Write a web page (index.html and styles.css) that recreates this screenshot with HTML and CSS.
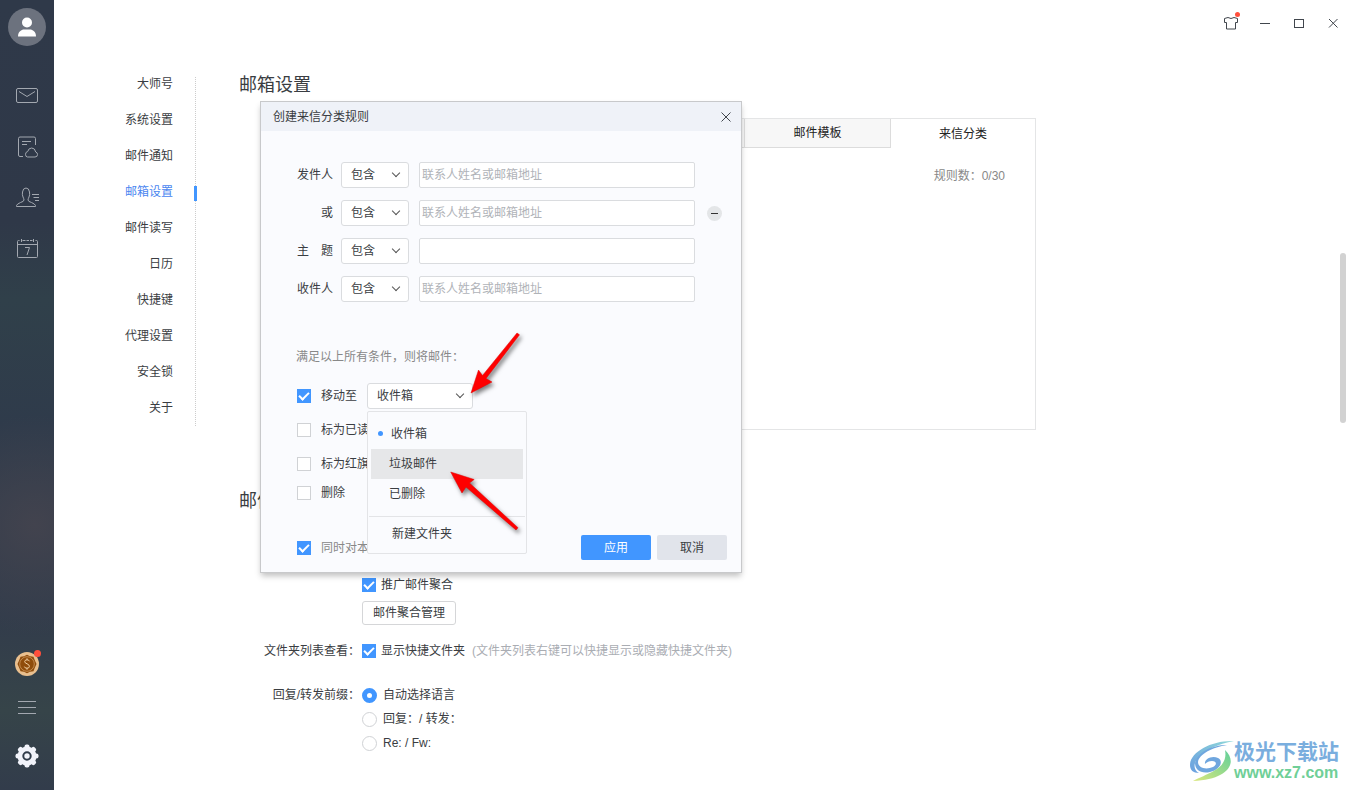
FILE: index.html
```html
<!DOCTYPE html>
<html lang="zh-CN">
<head>
<meta charset="utf-8">
<title>邮箱设置</title>
<link rel="stylesheet" href="styles.css">
</head>
<body>
<div class="app">
  <aside class="sidebar">
    <button class="avatar" aria-label="avatar">
      <svg width="18" height="20" viewBox="0 0 18 20"><g fill="#fff"><circle cx="9" cy="5.500" r="5"/><path d="M0 19.500c0-5 3.500-7 6-7h6c2.500 0 6 2 6 7z"/></g></svg>
    </button>
    <nav class="side-nav">
      <button class="icon-btn" aria-label="mail"><svg width="24" height="24" viewBox="0 0 24 24"><rect x="1.500" y="4.500" width="21" height="14" rx="1.500"/><path d="M4 7.500l8 5L20 7.500"/></svg></button>
      <button class="icon-btn" aria-label="notes"><svg width="24" height="24" viewBox="0 0 24 24"><path d="M8 21.500H5q-1.500 0-1.500-1.500V3.500Q3.500 2 5 2h14q1.500 0 1.500 1.500V10M7 6.500h9M7 9.500h5M12.500 22h7.500q2.500 0 2.500-2.500 0-2-1.800-2.500-.7-4-4-4-3.200 0-4 3.500-2.200.5-2.200 2.800 0 2.700 2 2.700z"/></svg></button>
      <button class="icon-btn" aria-label="contacts"><svg width="24" height="24" viewBox="0 0 24 24"><path d="M1.500 20.500v-1q.5-1.500 4-3 3.500-1 3.500-2.500 0-1-1-3Q7 9 7.500 6q.5-4 3.500-4t3.500 4q.5 3-.5 5-1 2-1 3 0 1.500 3.500 2.500 3.500 1.500 4 3v1zM17 8.500h7M18.500 11.500H24M20 14.500h4"/></svg></button>
      <button class="icon-btn" aria-label="calendar"><svg width="24" height="24" viewBox="0 0 24 24"><path d="M4.500 3.500h-1q-1 0-1 1v15q0 1 1 1h18q1 0 1-1v-15q0-1-1-1h-1M7.500 3.500h3M11.500 3.500h2.500M15 3.500h2.500M2.500 7.500h20M6.500 2v3M18.500 2v3M10 10.500h4.500l-2.500 7.500"/></svg></button>
    </nav>
    <div class="side-foot">
      <button class="icon-btn coin" aria-label="coin"><svg width="24" height="24" viewBox="0 0 24 24"><circle cx="12" cy="12" r="12" fill="#e9bf8e" stroke="none"/><path d="M12 2.700l3 1.600 3.500.4 1.200 3.300L21.500 12l-1.800 4-1.200 3.300-3.500.4-3 1.600-3-1.600-3.500-.4L4.300 16 2.500 12l1.800-4 1.200-3.300 3.500-.4z" fill="#8f4c0b" stroke="none"/><circle cx="12" cy="12" r="7.300" stroke="#d9a56c" stroke-width=".7"/><path d="M14.500 9.300q-.5-1.500-2.500-1.500T9.700 9.500q0 1.500 2.300 2.300t2.400 2.500q0 1.900-2.400 1.900t-2.600-1.600M12 6.300v1.500M12 16v1.700" stroke="#f0cfa4"/></svg></button>
      <button class="icon-btn" aria-label="menu"><svg width="24" height="24" viewBox="0 0 24 24"><path d="M3 6.500h18M3 12.500h18M3 18.500h18"/></svg></button>
      <button class="icon-btn gear" aria-label="settings"><svg width="24" height="24" viewBox="0 0 24 24"><g fill="#f1f3fa" stroke="none"><circle cx="12" cy="12" r="9.500"/><g id="teeth"><rect x="9.500" y="0.500" width="5" height="23" rx="2"/><rect x="0.500" y="9.500" width="23" height="5" rx="2"/></g><use href="#teeth" transform="rotate(45 12 12)"/></g><circle cx="12" cy="12" r="3.700" stroke="#2f3b49" stroke-width="2"/></svg></button>
    </div>
  </aside>

  <div class="main">
    <header class="titlebar">
      <button class="win-btn skin" aria-label="skin"><svg width="16" height="16" viewBox="0 0 16 16"><path d="M5 2.500q3 2 6 0l3.500 1v4h-2v6.500h-9V7.500h-2v-4z"/></svg></button>
      <button class="win-btn" aria-label="minimize"><svg width="16" height="16" viewBox="0 0 16 16"><path d="M3 8.500h10"/></svg></button>
      <button class="win-btn" aria-label="maximize"><svg width="16" height="16" viewBox="0 0 16 16"><rect x="3.500" y="4.500" width="9" height="8"/></svg></button>
      <button class="win-btn" aria-label="close"><svg width="16" height="16" viewBox="0 0 16 16"><path d="M4 4l8.500 8.500M12.500 4L4 12.500"/></svg></button>
    </header>
    <div class="body">
      <nav class="settings-nav">
        <a href="#">大师号</a>
        <a href="#">系统设置</a>
        <a href="#">邮件通知</a>
        <a href="#" class="active">邮箱设置</a>
        <a href="#">邮件读写</a>
        <a href="#">日历</a>
        <a href="#">快捷键</a>
        <a href="#">代理设置</a>
        <a href="#">安全锁</a>
        <a href="#">关于</a>
      </nav>
      <main class="content">
        <h2 class="heading">邮箱设置</h2>
        <section class="panel">
          <div class="tabs">
            <span class="tab-rest"></span>
            <button class="tab">邮件模板</button>
            <button class="tab current">来信分类</button>
          </div>
          <p class="count">规则数：0/30</p>
        </section>
        <h2 class="heading second">邮件</h2>
        <div class="form">
          <div class="field">
            <span class="field-name"></span>
            <label class="opt"><input type="checkbox" class="check" checked>推广邮件聚合</label>
          </div>
          <div class="field manage">
            <span class="field-name"></span>
            <button class="plain-btn">邮件聚合管理</button>
          </div>
          <div class="field folders">
            <span class="field-name">文件夹列表查看：</span>
            <label class="opt"><input type="checkbox" class="check" checked>显示快捷文件夹</label>
            <span class="hint">(文件夹列表右键可以快捷显示或隐藏快捷文件夹)</span>
          </div>
          <div class="field">
            <span class="field-name">回复/转发前缀：</span>
            <div class="radios">
              <label class="opt"><input type="radio" name="prefix" class="radio" checked>自动选择语言</label>
              <label class="opt"><input type="radio" name="prefix" class="radio">回复：/ 转发：</label>
              <label class="opt"><input type="radio" name="prefix" class="radio">Re: / Fw:</label>
            </div>
          </div>
        </div>
      </main>
    </div>
    <div class="scroll-thumb"></div>
  </div>

  <div class="dialog" role="dialog" aria-labelledby="dlg-title">
    <div class="dialog-head">
      <h3 id="dlg-title">创建来信分类规则</h3>
      <button class="close" aria-label="close"><svg width="12" height="12" viewBox="0 0 12 12"><path d="M1.500 1.500l9 9M10.500 1.500l-9 9"/></svg></button>
    </div>
    <div class="dialog-body">
      <div class="rules">
        <div class="rule"><label for="r1">发件人</label><span class="pick"><select aria-label="发件人"><option>包含</option></select></span><input id="r1" class="text" type="text" placeholder="联系人姓名或邮箱地址"></div>
        <div class="rule"><label for="r2">或</label><span class="pick"><select aria-label="或"><option>包含</option></select></span><input id="r2" class="text" type="text" placeholder="联系人姓名或邮箱地址"><button class="remove" aria-label="remove"></button></div>
        <div class="rule"><label for="r3">主　题</label><span class="pick"><select aria-label="主题"><option>包含</option></select></span><input id="r3" class="text" type="text"></div>
        <div class="rule"><label for="r4">收件人</label><span class="pick"><select aria-label="收件人"><option>包含</option></select></span><input id="r4" class="text" type="text" placeholder="联系人姓名或邮箱地址"></div>
      </div>
      <p class="note">满足以上所有条件，则将邮件：</p>
      <div class="actions">
        <div class="move">
          <label class="opt wide"><input type="checkbox" class="check" checked>移动至</label>
          <span class="pick folder"><select aria-label="移动至"><option>收件箱</option></select></span>
          <div class="menu" role="listbox">
            <button class="item selected" role="option">收件箱</button>
            <button class="item hover" role="option">垃圾邮件</button>
            <button class="item" role="option">已删除</button>
            <hr>
            <button class="item new" role="option">新建文件夹</button>
          </div>
        </div>
        <label class="opt wide read"><input type="checkbox" class="check">标为已读</label>
        <label class="opt wide flag"><input type="checkbox" class="check">标为红旗</label>
        <label class="opt wide delete"><input type="checkbox" class="check">删除</label>
      </div>
      <div class="dialog-foot">
        <label class="opt wide muted"><input type="checkbox" class="check" checked>同时对本</label>
        <button class="btn primary">应用</button>
        <button class="btn">取消</button>
      </div>
    </div>
  </div>

  <svg class="arrows" width="90" height="220" viewBox="450 325 90 220">
    <g fill="#fe0000" stroke="#e00000" stroke-width=".5" stroke-linejoin="round">
      <path d="M471 393l7.500-23 4 5.500L517 333l2.500 1.800L486 378.500l6 3.500z"/>
      <path d="M450.700 472l23.500 7.500-4.700 3.500 48.500 44.700-2 2.300L466 487l-4 6z"/>
    </g>
  </svg>

  <div class="watermark">
    <svg width="44" height="42" viewBox="0 0 44 42">
      <defs><linearGradient id="leaf" x1="0" y1="1" x2="1" y2="0"><stop offset="0" stop-color="#dbe77c"/><stop offset="1" stop-color="#5fcf9a"/></linearGradient>
      <linearGradient id="wave" x1="0" y1="1" x2="1" y2="0"><stop offset="0" stop-color="#6a9fe0"/><stop offset="1" stop-color="#8fd8d8"/></linearGradient></defs>
      <path d="M44 1C22 0 0 12 0 25c0 5 3 8 9 8-5-3-6-8-2-14C14 10 28 4 44 1z" fill="url(#wave)"/>
      <path d="M37 5C23 7 9 14 8 22c0 6 8 8 15 5 4-2 4-6-1-6-3 0-5 1-7 3-1-5 7-9 13-6 6 3 2 12-8 14C11 34 5 30 5 23 7 13 21 5 37 5z" fill="#6fa6de"/>
      <path d="M35 10c14 13 2 30-32 31 8-4 13-6 19-9 10-5 15-12 13-22z" fill="url(#leaf)"/>
    </svg>
    <div class="wm-text"><strong>极光下载站</strong><span>www.xz7.com</span></div>
  </div>
</div>
</body>
</html>
```
FILE: styles.css
```css
*, *::before, *::after { box-sizing: border-box; }
body, h2, h3, p { margin: 0; font-weight: normal; }
body {
  font: 12px/16px "Liberation Sans", "Noto Sans CJK SC", sans-serif;
  color: #3a3d42;
  background: #fff;
}
button, input, select { font: inherit; color: inherit; }
button { padding: 0; border: 0; background: none; }
svg { display: block; fill: none; }
a { color: inherit; text-decoration: none; }

.app { position: relative; display: flex; height: 100vh; overflow: hidden; }

/* Left rail */
.sidebar {
  flex: none;
  width: 54px;
  padding: 8px 0 22px;
  display: flex;
  flex-direction: column;
  align-items: center;
  background:
    radial-gradient(circle at 35px 525px, #42434e, transparent 110px),
    linear-gradient(#2f3949, #2f3848 28%, #30404a 38%, #2f3b4b 54%, #323c4b 78%, #364449 90%, #323c4b);
}
.avatar {
  width: 38px; height: 38px;
  border-radius: 50%;
  background: #6c727e;
  display: grid;
  place-items: center;
}
.icon-btn { position: relative; display: block; }
.icon-btn svg { stroke: #a3a8b0; }
.side-nav { margin-top: 38px; display: flex; flex-direction: column; gap: 27px; }
.side-foot { margin-top: auto; display: flex; flex-direction: column; gap: 19px; }
.gear { margin-top: 6px; }
.coin::after, .skin::after {
  content: "";
  position: absolute;
  top: -2px; right: -2px;
  width: 7px; height: 7px;
  border-radius: 50%;
  background: #ff4f3c;
}

/* Window bar */
.main { position: relative; flex: 1; min-width: 0; }
.titlebar { height: 47px; padding: 0 9px 2px 0; display: flex; justify-content: flex-end; align-items: center; gap: 18px; }
.win-btn { position: relative; }
.win-btn svg { stroke: #41464d; }
.skin::after { top: -3px; right: -1px; width: 5px; height: 5px; }

/* Settings */
.body { display: flex; align-items: flex-start; }
.settings-nav {
  flex: none;
  width: 142px;
  margin-top: 30px;
  padding: 0 22px 11px 0;
  display: flex;
  flex-direction: column;
  gap: 22px;
  text-align: right;
  line-height: 14px;
  border-right: 1px dotted #ccc;
}
.active { position: relative; color: #4a86f0; }
.active::after {
  content: "";
  position: absolute;
  top: 1px; right: -24px;
  width: 3px; height: 15px;
  background: #4196ff;
}
.content { flex: 1; max-width: 840px; margin-left: 43px; padding-top: 26px; }
.heading { font-size: 18px; line-height: 24px; }
.panel { margin: 21px 0 0 59px; width: 738px; height: 312px; border: 1px solid #e4e5e6; }
.tabs { display: flex; height: 29px; }
.tab-rest { flex: 1; }
.tab { width: 146px; color: #222; }
.tab-rest, .tab:not(.current) { background: #f7f7f7; border: solid #dcdcdc; border-width: 0 1px 1px 0; }
.tab.current { width: 144px; }
.count { margin: 20px 30px 0; text-align: right; color: #888; }
.second { margin-top: 59px; }
.form { margin-top: 64px; }
.field { display: flex; }
.field-name { width: 121px; margin-right: 2px; text-align: right; }
.opt { display: flex; align-items: center; gap: 5px; }
.wide { gap: 10px; }
.manage { margin-top: 8px; }
.plain-btn { width: 94px; height: 24px; border: 1px solid #d5d6d8; border-radius: 3px; }
.folders { margin: 18px 0 28px; }
.hint { margin-left: 7px; color: #aaadb3; }
.radios { display: flex; flex-direction: column; gap: 8px; }
.radios .opt { gap: 6px; }
.check, .radio { appearance: none; position: relative; flex: none; width: 14px; height: 14px; margin: 0; background: #fff; border: 1px solid #d0d2d5; }
.radio { width: 15px; height: 15px; border-radius: 50%; }
.check:checked { background: #4196ff; border-color: #4196ff; }
.check:checked::after {
  content: "";
  position: absolute;
  left: 1px; top: 2px;
  width: 10px; height: 6px;
  border: solid #fff;
  border-width: 0 0 2px 2px;
  transform: rotate(-45deg);
}
.radio:checked { border: 5px solid #4196ff; }
.scroll-thumb { position: absolute; right: 4px; top: 253px; width: 6px; height: 170px; border-radius: 3px; background: #d2d2d2; }

/* Dialog */
.dialog {
  position: absolute;
  left: 260px; top: 101px;
  width: 482px;
  border: 1px solid #c8c9cb;
  background: #fafbfe;
  box-shadow: 0 4px 6px -1px rgba(0, 0, 0, .25);
}
.dialog-head { display: flex; justify-content: space-between; align-items: center; height: 29px; padding: 0 9px 0 12px; background: #eff2f8; }
.dialog-head h3 { font-size: 12px; }
.close svg { stroke: #41464d; }
.dialog-body { padding: 31px 14px 12px 35px; }
.rules { display: flex; flex-direction: column; gap: 12px; }
.rule { display: flex; align-items: center; }
.rule label { width: 37px; margin-right: 8px; text-align: right; }
.pick { position: relative; width: 68px; }
.pick select { appearance: none; width: 100%; height: 26px; padding: 0 9px; background: #fff; border: 1px solid #dadcdf; border-radius: 3px; display: block; }
.pick::after {
  content: "";
  position: absolute;
  right: 10px; top: 8px;
  width: 6px; height: 6px;
  border: solid #555;
  border-width: 0 1px 1px 0;
  transform: rotate(45deg);
}
.text { width: 276px; height: 26px; margin-left: 10px; padding: 0 2px; background: #fff; border: 1px solid #dadcdf; border-radius: 2px; }
.text::placeholder { color: #b0b3b8; }
.remove { width: 15px; height: 15px; margin-left: 12px; border-radius: 50%; background: #e4e6e8; display: grid; place-items: center; }
.remove::before { content: ""; width: 7px; height: 1px; background: #333; }
.note { margin-top: 47px; color: #888; }
.actions { margin-top: 18px; padding-left: 1px; }
.move { position: relative; display: flex; align-items: center; }
.folder { width: 106px; margin-left: 10px; }
.menu {
  position: absolute;
  left: 70px; top: 28px;
  width: 160px;
  padding: 7px 1px 4px;
  background: #fafbfe;
  border: 1px solid #e3e4e7;
  border-radius: 2px;
}
.item { position: relative; display: block; width: 152px; height: 30px; margin: 0 2px; padding-left: 18px; text-align: left; }
.selected { padding-left: 20px; }
.selected::before { content: ""; position: absolute; left: 7px; top: 12px; width: 5px; height: 5px; border-radius: 50%; background: #4196ff; }
.hover { background: #e6e7e9; }
.new { padding-left: 21px; }
.menu hr { margin: 7px 0 2px; border: 0; border-top: 1px solid #e3e4e7; }
.read { margin-top: 13px; }
.flag { margin-top: 18px; }
.delete { margin-top: 13px; }
.dialog-foot { display: flex; align-items: center; gap: 6px; margin-top: 34px; padding-left: 1px; }
.muted { margin-right: auto; color: #888; }
.btn { width: 70px; height: 25px; border-radius: 2px; background: #e1e4eb; }
.primary { background: #4196ff; color: #fff; }

/* Annotations */
.arrows { position: absolute; left: 450px; top: 325px; filter: drop-shadow(2px 3px 2px rgba(0, 0, 0, .5)); }
.watermark { position: absolute; right: 11px; bottom: 8px; display: flex; align-items: center; }
.wm-text { display: flex; flex-direction: column; }
.wm-text strong { font-size: 21px; line-height: 24px; color: #7aaede; }
.wm-text span { font: bold 16px/18px "Liberation Sans", sans-serif; color: #6fcf97; }
```
